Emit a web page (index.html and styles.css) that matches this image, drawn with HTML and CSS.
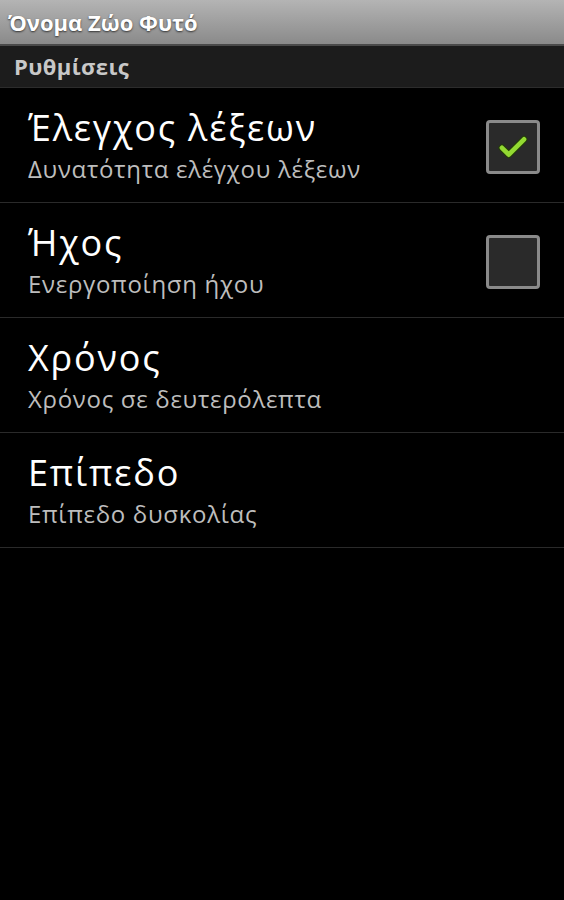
FILE: index.html
```html
<!DOCTYPE html>
<html lang="el">

<head>
  <meta charset="UTF-8">
  <meta name="viewport" content="width=device-width, initial-scale=1.0">
  <title>Όνομα Ζώο Φυτό</title>
  <link rel="stylesheet" href="styles.css">
</head>

<body>
  <header class="title-bar">Όνομα Ζώο Φυτό</header>
  <div class="category">Ρυθμίσεις</div>

  <ul class="prefs">
    <li class="pref">
      <div class="pref-text">
        <div class="pref-title">Έλεγχος λέξεων</div>
        <div class="pref-summary">Δυνατότητα ελέγχου λέξεων</div>
      </div>
      <span class="checkbox">
        <svg viewBox="0 0 40 40" width="34" height="34">
          <path d="M7 21 L15 29 L33 11" fill="none" stroke="#233d08" stroke-width="8" stroke-linecap="round" stroke-linejoin="round" />
          <path d="M7 21 L15 29 L33 11" fill="none" stroke="#93d932" stroke-width="5.5" stroke-linecap="round" stroke-linejoin="round" />
        </svg>
      </span>
    </li>
    <li class="pref">
      <div class="pref-text">
        <div class="pref-title">Ήχος</div>
        <div class="pref-summary">Ενεργοποίηση ήχου</div>
      </div>
      <span class="checkbox"></span>
    </li>
    <li class="pref">
      <div class="pref-text">
        <div class="pref-title">Χρόνος</div>
        <div class="pref-summary">Χρόνος σε δευτερόλεπτα</div>
      </div>
    </li>
    <li class="pref">
      <div class="pref-text">
        <div class="pref-title">Επίπεδο</div>
        <div class="pref-summary">Επίπεδο δυσκολίας</div>
      </div>
    </li>
  </ul>
</body>

</html>
```

FILE: styles.css
```css
body {
  margin: 0;
  background-color: #000;
  font-family: "Open Sans", "DejaVu Sans", sans-serif;
  color: #fff;
}

/* Window title */
.title-bar {
  height: 44px;
  line-height: 44px;
  padding-left: 8px;
  font-size: 22px;
  font-weight: bold;
  background: linear-gradient(#b4b4b4, #8a8a8a);
  border-bottom: 2px solid #4a4a4a;
  text-shadow: 0 1px 2px #333;
}

/* Category header */
.category {
  height: 41px;
  line-height: 41px;
  padding-left: 14px;
  font-size: 22px;
  font-weight: bold;
  letter-spacing: 0.4px;
  color: #c8c8c8;
  background-color: #1c1c1c;
  border-bottom: 1px solid #2c2c2c;
}

/* Preference rows */
.prefs {
  list-style: none;
  margin: 0;
  padding: 0;
}

.pref {
  display: flex;
  align-items: center;
  height: 114px;
  padding: 0 24px 0 28px;
  border-bottom: 1px solid #2a2a2a;
  box-sizing: content-box;
}

.pref-text {
  flex: 1;
  margin-top: 2px;
}

.pref-title {
  font-size: 36px;
  line-height: 40px;
  letter-spacing: 1.8px;
}

.pref-summary {
  margin-top: 6px;
  font-size: 24px;
  line-height: 30px;
  letter-spacing: 0.7px;
  color: #bdbdbd;
}

.checkbox {
  display: flex;
  align-items: center;
  justify-content: center;
  width: 48px;
  height: 48px;
  margin-top: 4px;
  border: 3px solid #8a8a8a;
  border-radius: 4px;
  background-color: #2a2a2a;
}
```
